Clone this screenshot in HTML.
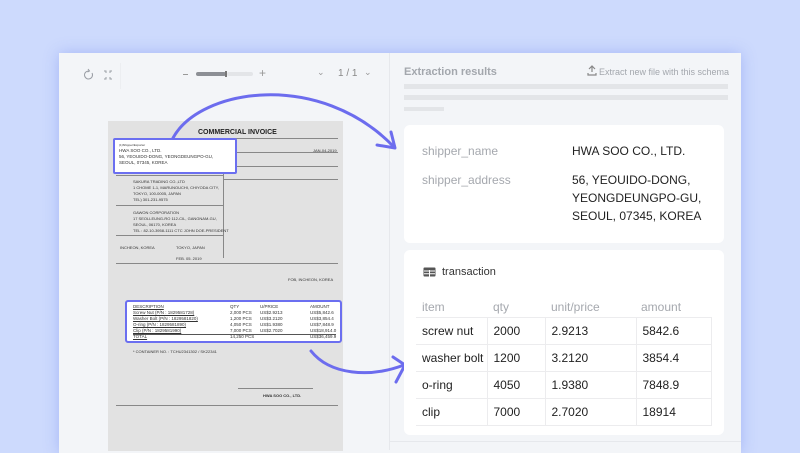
<!DOCTYPE html>
<html><head><style>
*{margin:0;padding:0;box-sizing:border-box}
body{width:800px;height:450px;overflow:hidden;background:#cddafd;font-family:"Liberation Sans",sans-serif;position:relative}
.win{position:absolute;left:59px;top:53px;width:682px;height:400px;background:#f3f5f8;box-shadow:0 0 14px rgba(120,140,240,.45)}
.div{position:absolute;left:389px;top:53px;width:1px;height:397px;background:#e6e8ec}
.doc{position:absolute;left:108px;top:121px;width:235px;height:330px;background:#e2e2e2;font-size:4px;color:#333}
.t{position:absolute;white-space:nowrap}
.card{position:absolute;background:#fff;border-radius:6px}
.lbl{color:#a5a8ae;font-size:12px;position:absolute}
.val{color:#222;font-size:12px;position:absolute;line-height:18px}
.sk{position:absolute;background:#e3e5e8;height:5px}
table{position:absolute;border-collapse:collapse;font-size:12px;color:#222}
td{border:1px solid #ececee;height:27px;padding-left:6px}
</style></head><body>
<div class="win"></div>
<div class="div"></div>
<div style="position:absolute;left:73px;top:63px;width:48px;height:26px;border-right:1px solid #eceef1"></div>
<svg style="position:absolute;left:78px;top:66px" width="40" height="18"><path d="M11 5a4 4 0 1 0 3 2" fill="none" stroke="#9a9ea5" stroke-width="1"/><path d="M10 3l1.5 2-2 1" fill="none" stroke="#9a9ea5"/><g stroke="#9a9ea5" stroke-width="1" fill="none"><path d="M26 5h2v2M34 5h-2v2M26 13h2v-2M34 13h-2v-2"/></g></svg>
<div style="position:absolute;left:183px;top:74px;width:5px;height:1px;background:#999"></div>
<div style="position:absolute;left:196px;top:72px;width:30px;height:4px;background:#8c8f95;border-radius:2px"></div>
<div style="position:absolute;left:225px;top:71px;width:2px;height:6px;background:#777"></div>
<div style="position:absolute;left:227px;top:72px;width:26px;height:4px;background:#e3e5e8;border-radius:2px"></div>
<div class="t" style="left:259px;top:66px;font-size:12px;color:#999">+</div>
<div class="t" style="left:317px;top:67px;font-size:9px;color:#999">⌄</div>
<div class="t" style="left:338px;top:68px;font-size:10px;color:#888">1 / 1</div>
<div class="t" style="left:364px;top:67px;font-size:9px;color:#999">⌄</div>
<div class="doc">
<div class="t" style="left:90px;top:8px;font-size:7px;font-weight:bold;color:#222">COMMERCIAL INVOICE</div>
<div style="position:absolute;left:115px;top:17px;width:115px;height:1px;background:#888"></div>
<div style="position:absolute;left:115px;top:31px;width:115px;height:1px;background:#888"></div>
<div style="position:absolute;left:115px;top:45px;width:115px;height:1px;background:#888"></div>
<div style="position:absolute;left:115px;top:58px;width:115px;height:1px;background:#888"></div>
<div style="position:absolute;left:115px;top:17px;width:1px;height:120px;background:#888"></div>
<div class="t" style="left:205px;top:27px">JAN-04-2019</div>
<div style="position:absolute;left:8px;top:54px;width:108px;height:1px;background:#888"></div>
<div class="t" style="left:25px;top:58px;line-height:6px">SAKURA TRADING CO.,LTD<br>1 CHOME 1-1, MARUNOUCHI, CHIYODA CITY,<br>TOKYO, 100-0005, JAPAN<br>TEL) 301-231-9575</div>
<div style="position:absolute;left:8px;top:84px;width:108px;height:1px;background:#888"></div>
<div class="t" style="left:25px;top:89px;line-height:6px">GAWON CORPORATION<br>17 SEOLLEUNG-RO 112-CIL, GANGNAM-GU,<br>SEOUL, 06170, KOREA<br>TEL : 82-10-3958-1111 CTC JOHN DOE-PRESIDENT</div>
<div style="position:absolute;left:8px;top:114px;width:108px;height:1px;background:#888"></div>
<div class="t" style="left:12px;top:124px">INCHEON, KOREA</div><div class="t" style="left:68px;top:124px">TOKYO, JAPAN</div>
<div class="t" style="left:68px;top:135px">FEB. 05. 2019</div>
<div style="position:absolute;left:8px;top:142px;width:222px;height:1px;background:#888"></div>
<div class="t" style="left:180px;top:156px">FOB, INCHEON, KOREA</div>
<div class="t" style="left:25px;top:228px">* CONTAINER NO. : TCHU2341302 / SK22341</div>
<div class="t" style="left:155px;top:272px;font-weight:bold">HWA SOO CO., LTD.</div>
<div style="position:absolute;left:130px;top:267px;width:75px;height:1px;background:#888"></div>
<div style="position:absolute;left:8px;top:284px;width:222px;height:1px;background:#888"></div>
</div>
<div style="position:absolute;left:113px;top:138px;width:124px;height:36px;background:#fff;border:2px solid #6b6ff0;border-radius:2px;font-size:4.5px;color:#333;padding:2px 4px;line-height:6px"><span style="font-size:3px">(1)Shipper/Exporter</span><br>HWA SOO CO., LTD.<br>56, YEOUIDO-DONG, YEONGDEUNGPO-GU,<br>SEOUL, 07345, KOREA</div>
<div style="position:absolute;left:125px;top:300px;width:217px;height:43px;background:#fff;border:2px solid #6b6ff0;border-radius:3px;font-size:4.5px;color:#333;line-height:6px">
<div class="t" style="left:6px;top:2px;text-decoration:underline">DESCRIPTION<br>Screw Nut (P/N : 1829581728)<br>Washer Bolt (P/N : 1829581820)<br>O-ring (P/N : 1829581890)<br>Clip (P/N : 1829581990)<br>TOTAL</div>
<div class="t" style="left:103px;top:2px">QTY<br>2,000 PCS<br>1,200 PCS<br>4,050 PCS<br>7,000 PCS<br>14,250 PCS</div>
<div class="t" style="left:133px;top:2px">U/PRICE<br>US$2.9213<br>US$3.2120<br>US$1.9380<br>US$2.7020</div>
<div class="t" style="left:183px;top:2px">AMOUNT<br>US$5,842.6<br>US$3,854.4<br>US$7,848.9<br>US$18,914.0<br>US$36,459.9</div>
<div style="position:absolute;left:6px;top:32px;width:203px;height:1px;background:#555"></div>
</div>
<svg style="position:absolute;left:0;top:0" width="800" height="450"><g fill="none" stroke="#6c6cee" stroke-width="3" stroke-linecap="round" stroke-linejoin="round"><path d="M173 138C200 88 320 70 394 147"/><path d="M377 145L395 148L391 132"/><path d="M311 351C330 375 370 378 404 365"/><path d="M393 357L405 365L396 382"/></g></svg>
<div class="t" style="left:404px;top:66px;font-size:11px;color:#a3a7ad;font-weight:bold">Extraction results</div>
<svg style="position:absolute;left:587px;top:65px" width="10" height="11"><path d="M5 1v6M2 4l3-3 3 3M1 8v2h8V8" fill="none" stroke="#888" stroke-width="1.2"/></svg>
<div class="t" style="left:599px;top:67px;font-size:9px;color:#a3a7ad">Extract new file with this schema</div>
<div class="sk" style="left:404px;top:84px;width:324px"></div>
<div class="sk" style="left:404px;top:95px;width:324px"></div>
<div class="sk" style="left:404px;top:107px;width:40px;height:4px"></div>
<div class="card" style="left:404px;top:125px;width:320px;height:118px">
<div class="lbl" style="left:18px;top:19px">shipper_name</div>
<div class="val" style="left:168px;top:17px">HWA SOO CO., LTD.</div>
<div class="lbl" style="left:18px;top:48px">shipper_address</div>
<div class="val" style="left:168px;top:46px">56, YEOUIDO-DONG,<br>YEONGDEUNGPO-GU,<br>SEOUL, 07345, KOREA</div>
</div>
<div class="card" style="left:404px;top:250px;width:320px;height:185px">
<svg style="position:absolute;left:19px;top:17px" width="13" height="10"><rect x=".5" y=".5" width="12" height="9" rx="1" fill="#555"/><path d="M1 4h11M1 6.8h11M6.5 3v7" stroke="#fff" stroke-width="1"/></svg>
<div class="t" style="left:38px;top:16px;font-size:11px;color:#333">transaction</div>
<div class="lbl" style="left:18px;top:50px">item</div>
<div class="lbl" style="left:89px;top:50px">qty</div>
<div class="lbl" style="left:147px;top:50px">unit/price</div>
<div class="lbl" style="left:237px;top:50px">amount</div>
</div>
<table style="left:416px;top:317px;width:296px">
<tr><td style="width:71px;border-left:0">screw nut</td><td style="width:58px">2000</td><td style="width:91px">2.9213</td><td>5842.6</td></tr>
<tr><td style="border-left:0">washer bolt</td><td>1200</td><td>3.2120</td><td>3854.4</td></tr>
<tr><td style="border-left:0">o-ring</td><td>4050</td><td>1.9380</td><td>7848.9</td></tr>
<tr><td style="border-left:0">clip</td><td>7000</td><td>2.7020</td><td>18914</td></tr>
</table>
<div style="position:absolute;left:390px;top:441px;width:351px;height:1px;background:#e6e8ec"></div>
</body></html>
